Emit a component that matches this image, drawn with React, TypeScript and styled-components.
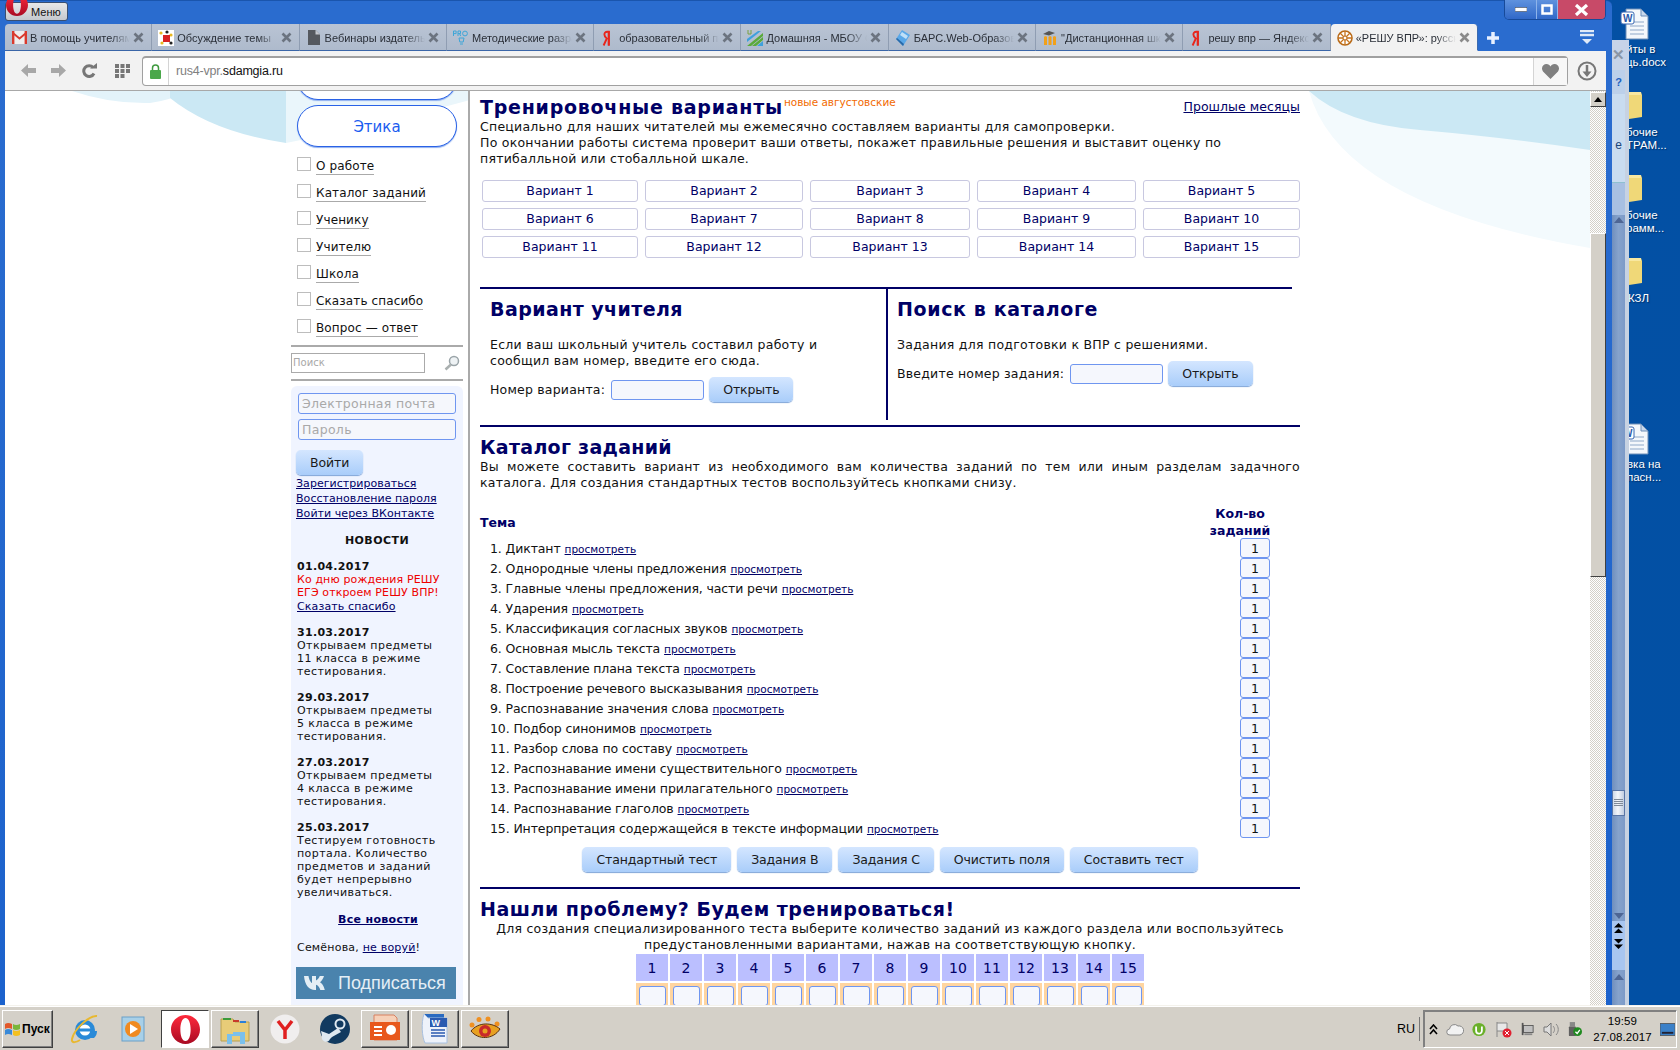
import React from 'react';
import styled, { createGlobalStyle } from 'styled-components';

const Global = createGlobalStyle`
  html, body { margin: 0; padding: 0; overflow: hidden; background: #054ea4; }
  * { box-sizing: border-box; }
`;
const VERDANA = `"DejaVu Sans", Verdana, sans-serif`;
const UI = `"Liberation Sans", Arial, sans-serif`;
const NAVY = '#000066';

const Desktop = styled.div`
  width: 1680px; height: 1050px; display: flex; flex-direction: column; overflow: hidden;
  font-family: ${UI};
`;
const Workspace = styled.div`
  position: relative; flex: 1; min-height: 0;
  background: linear-gradient(115deg, #0a5cb4 0%, #1f6db8 6%, #0650a4 14%, #0250a4 100%);
`;
const DeskIcon = styled.div<{ $x: number; $y: number }>`
  position: absolute; left: ${p => p.$x}px; top: ${p => p.$y}px;
`;
const DeskLabel = styled.div<{ $x: number; $y: number }>`
  position: absolute; left: ${p => p.$x}px; top: ${p => p.$y}px;
  color: #fff; font-size: 11.5px; line-height: 13px; font-family: ${UI}; white-space: pre;
  text-shadow: 1px 1px 1px #00306a;
`;

/* window behind */
const BackWindow = styled.div`
  position: absolute; left: 1612px; top: 40px; width: 17px; height: 965px;
  display: flex; flex-direction: column; border-right: 4px solid #c7d2e2; background: #7f9cc8;
  border-top-left-radius: 2px;
`;
const BackTitle = styled.div`
  height: 30px; background: #c6d3e8; color: #8a96a6; font: bold 15px ${UI};
  display: flex; align-items: center; justify-content: center; margin-right: -4px; padding-right: 4px;
`;
const BackHelp = styled.div`
  height: 24px; background: #bcd0ea; display: flex; align-items: center; justify-content: center;
  color: #2060c0; font: bold 11px ${UI};
`;
const BackPane = styled.div`
  height: 89px; background: #c9dcf0; display: flex; align-items: flex-end; justify-content: center;
  padding-bottom: 30px; color: #21467a; font: 12px ${UI}; border-bottom: 1px solid #8fc0d0;
`;
const BackBand = styled.div`
  height: 32px; background: #a8c0e2;
`;
const BackTrack = styled.div`
  flex: 1; display: flex; flex-direction: column; align-items: center;
  background: linear-gradient(90deg, #6f8fbe, #86a3cc 50%, #7c9ac8);
`;
const BackSpacer = styled.div<{ $h: number }>` height: ${p => p.$h}px; flex: none; `;
const BackThumb = styled.div`
  width: 13px; height: 26px; flex: none; background: linear-gradient(90deg,#cdd8e8,#f4f6fa 45%,#c0cde0);
  border: 1px solid #5a76a6; display: flex; align-items: center; justify-content: center;
`;
const BackJump = styled.div`
  width: 13px; height: 49px; flex: none; background: #a8c6f0; display: flex; flex-direction: column;
  align-items: center; padding-top: 2px; gap: 1px; border-bottom: 4px solid #a8c6f0;
`;

/* browser window */
const BrowserWindow = styled.div`
  position: absolute; left: 0; top: 0; width: 1612px; height: 1005px;
  display: flex; flex-direction: column; padding: 0 6px 0 5px;
  background: linear-gradient(#2a6ccf, #2a6ccf 60px, #1c62cc);
  border-top: 1px solid #1a55ad; border-top-right-radius: 6px;
`;
const TitleRow = styled.div`
  height: 23px; flex: none; display: flex; justify-content: space-between; align-items: flex-start;
`;
const MenuButton = styled.div`
  position: relative; width: 63px; height: 19px; margin-top: 1px; border: 1px solid #3a4f70; border-radius: 3px;
  background: linear-gradient(#e8e8e8, #c4c8ce); color: #111; font: 11px ${UI};
  display: flex; align-items: center; padding-left: 25px;
`;
const MenuLogo = styled.span`
  position: absolute; left: 0; top: -9px; display: flex;
`;
const Controls = styled.div`
  width: 102px; height: 20px; display: flex; margin-top: -1px; border: 1px solid #174a9a; border-top: 0;
  border-radius: 0 0 5px 5px; overflow: hidden; background: #3a76d4;
`;
const CtrlBtn = styled.div<{ $w: number; $red?: boolean }>`
  width: ${p => p.$w}px; display: flex; align-items: center; justify-content: center;
  background: ${p => (p.$red ? '#c84a68' : 'linear-gradient(#5f92de,#3068c8)')};
  border-right: ${p => (p.$red ? '0' : '1px solid #8fb4ea')};
`;
const TabRow = styled.div`
  height: 27px; flex: none; display: flex; align-items: stretch;
`;
const Tab = styled.div<{ $active?: boolean }>`
  width: 147.3px; flex: none; display: flex; align-items: center; gap: 3px; padding: 1px 7px 0 6px;
  background: ${p => (p.$active ? '#f2f2f2' : 'linear-gradient(#b9c4d4,#aebacc)')};
  border-right: 1px solid ${p => (p.$active ? '#3a6ab0' : '#8f9db2')};
  border-bottom: 1px solid ${p => (p.$active ? '#f2f2f2' : '#3a66a8')};
  border-radius: ${p => (p.$active ? '4px 4px 0 0' : '0')};
  &:first-child { border-top-left-radius: 4px; }
`;
const TabIcon = styled.span`
  width: 16px; height: 16px; flex: none; display: flex; align-items: center; justify-content: center;
`;
const TabLabel = styled.span`
  flex: 1; min-width: 0; overflow: hidden; white-space: nowrap; color: #2a2f38; font: 11px ${UI};
  -webkit-mask-image: linear-gradient(90deg, #000 80%, transparent);
  mask-image: linear-gradient(90deg, #000 80%, transparent);
`;
const TabClose = styled.span`
  width: 11px; height: 11px; flex: none; display: flex;
`;
const TabExtras = styled.div`
  flex: 1; display: flex; align-items: center; justify-content: space-between; padding: 0 11px 0 9px;
`;
const Toolbar = styled.div`
  height: 40px; flex: none; display: flex; align-items: center; background: #f2f2f2;
  border-bottom: 1px solid #a8a8a8; padding: 0 0 0 16px;
`;
const NavIcon = styled.span<{ $w: number }>`
  width: ${p => p.$w}px; flex: none; display: flex; align-items: center;
`;
const Address = styled.div`
  width: 1426px; height: 30px; flex: none; display: flex; align-items: center; background: #fff;
  border: 1px solid #a0a0a0; border-top-width: 2px; border-radius: 4px; margin-left: 0;
`;
const LockBox = styled.span`
  width: 26px; height: 100%; flex: none; display: flex; align-items: center; justify-content: center;
  border-right: 1px solid #d4d4d4; margin: 0 7px 0 0;
`;
const UrlFaint = styled.span` color: #808080; font: 12.5px ${UI}; letter-spacing: -.2px; `;
const UrlMain = styled.span` color: #111; font: 12.5px ${UI}; letter-spacing: -.2px; `;
const HeartBox = styled.span`
  margin-left: auto; width: 34px; height: 100%; flex: none; display: flex; align-items: center;
  justify-content: center; border-left: 1px solid #d4d4d4; background: #f7f7f7;
`;
const DownloadBox = styled.span`
  margin-left: 9px; display: flex;
`;

/* viewport */
const Viewport = styled.div`
  flex: 1; min-height: 0; display: flex;
`;
const Page = styled.div`
  position: relative; flex: 1; min-width: 0; overflow: hidden; background: #fff; display: flex;
  align-items: flex-start; padding-left: 286px;
`;
const PageDecor = styled.svg`
  position: absolute; left: 0; top: 0;
`;
const Side = styled.aside`
  position: relative; width: 172px; flex: none; margin-right: 5px; font-family: ${VERDANA};
`;
const SubjectButton = styled.div<{ $clip?: boolean }>`
  width: 160px; height: 42px; margin: ${p => (p.$clip ? '-33px 0 5px 6px' : '0 0 0 6px')};
  border: 1.5px solid #2a62e6; border-radius: 21px; background: #fff; color: #1a5cf0; padding-top: 2px;
  display: flex; align-items: center; justify-content: center; font: 15px ${VERDANA};
  box-shadow: 0 1px 1px #8fb0f0;
`;
const MenuList = styled.ul`
  list-style: none; margin: 10px 0 0; padding: 0 0 0 6px; height: 188px;
`;
const MenuItem = styled.li`
  height: 27px; display: flex; align-items: flex-start; gap: 5px;
`;
const MenuCheck = styled.span`
  width: 14px; height: 14px; flex: none; border: 1px solid #bdbdbd; background: #fff;
`;
const MenuLink = styled.span`
  font-size: 12px; line-height: 15px; color: #111; border-bottom: 1px solid #aaa; margin-top: 2px;
  letter-spacing: .12px;
`;
const SearchRow = styled.div`
  height: 36px; display: flex; align-items: center; justify-content: space-between; padding-right: 3px;
  border-top: 2px solid #aaa; border-bottom: 2px solid #aaa;
`;
const SearchField = styled.div`
  width: 134px; height: 20px; border: 1px solid #aaa; background: #fff; color: #a8a8a8;
  font: 10px/18px ${VERDANA}; padding-left: 1px;
`;
const LoginPanel = styled.div`
  margin-top: 5px; height: 640px; background: #f0f4ff; border-radius: 6px 6px 0 0; padding: 7px 5px 0;
`;
const LoginInput = styled.div`
  width: 158px; height: 21px; margin: 0 0 5px 2px; border: 1.5px solid #6f96f0; border-radius: 3px;
  background: #f5f7fc; color: #a9a9a9; font: 12.5px/20px ${VERDANA}; padding-left: 3px; letter-spacing: .3px;
`;
const BlueButton = styled.div`
  height: 25px; padding: 0 14px; flex: none; display: inline-flex; align-items: center; justify-content: center;
  border-radius: 5px; background: linear-gradient(#d4e6ff, #a9cdfa); color: #1a1a1a;
  font: 12.5px ${VERDANA}; letter-spacing: -.12px; box-shadow: 0 1px 1px #7fa5d8;
`;
const LoginActions = styled.div` margin-top: 10px; margin-bottom: 1px; `;
const SideLink = styled.a`
  display: block; font-size: 11px; line-height: 15px; color: ${NAVY}; text-decoration: underline;
  letter-spacing: .05px;
`;
const NewsHead = styled.div`
  margin-top: 13px; text-align: center; font-weight: bold; font-size: 11px; line-height: 14px; color: #111;
  letter-spacing: .45px;
`;
const NewsItem = styled.div<{ $first?: boolean }>`
  margin-top: ${p => (p.$first ? 12 : 13)}px; padding-left: 1px; font-size: 11px; line-height: 13px; color: #111;
  letter-spacing: .42px;
`;
const NewsDate = styled.div` font-weight: bold; letter-spacing: .3px; `;
const NewsRed = styled.div` color: #ee0000; letter-spacing: .12px; `;
const NewsLink = styled.a` display: block; margin-top: 1px; margin-bottom: 2px; color: ${NAVY}; text-decoration: underline; letter-spacing: .12px; `;
const AllNews = styled.a`
  display: block; margin-top: 14px; text-align: center; font-weight: bold; font-size: 11px; line-height: 14px;
  color: ${NAVY}; text-decoration: underline; padding-left: 2px; letter-spacing: .3px;
`;
const Thief = styled.div` margin-top: 14px; padding-left: 1px; font-size: 11px; line-height: 14px; color: #111; letter-spacing: .2px; `;
const ThiefLink = styled.a` color: ${NAVY}; text-decoration: underline; `;
const VkBanner = styled.div`
  margin-top: 12px; width: 160px; height: 32px; background: #4a83ad; color: #e4eef5; display: flex;
  align-items: center; gap: 9px; padding-left: 8px; font: 18px ${UI};
`;

const Main = styled.main`
  position: relative; width: 833px; flex: none; height: 1000px; background: #fff; border-left: 2px solid #aaa;
  padding: 0 1px 0 10px; font-family: ${VERDANA}; font-size: 12.5px; line-height: 16px; color: #111;
`;
const HeadRow = styled.div`
  height: 28px; padding-top: 3px; display: flex; align-items: center; justify-content: space-between;
`;
const HeadLeft = styled.div` display: flex; align-items: flex-start; `;
const Heading = styled.h2<{ $ls?: number }>`
  margin: 0; font-size: 19px; line-height: 24px; font-weight: bold; color: ${NAVY};
  letter-spacing: ${p => p.$ls ?? 0.3}px;
`;
const NewTag = styled.span`
  font-size: 10.5px; line-height: 12px; color: #f26a00; margin: 1px 0 0 1px;
`;
const PastLink = styled.a`
  color: ${NAVY}; text-decoration: underline; letter-spacing: .05px;
`;
const Para = styled.p<{ $center?: boolean; $just?: boolean }>`
  margin: 0; letter-spacing: .24px;
  text-align: ${p => (p.$center ? 'center' : p.$just ? 'justify' : 'left')};
`;
const VariantGrid = styled.div`
  margin: 13px 0 0 2px; display: grid; grid-template-columns: 156px 158px 160px 159px 157px;
  grid-auto-rows: 22px; column-gap: 7px; row-gap: 6px;
`;
const VariantBtn = styled.div`
  display: flex; align-items: center; justify-content: center; color: ${NAVY}; padding-top: 0;
  border: 1px solid #c8c8e0; border-radius: 3px; background: #fff;
`;
const TwoPanels = styled.section`
  margin-top: 29px; width: 812px; height: 133px; display: flex; border-top: 2px solid ${NAVY};
`;
const PanelCol = styled.div<{ $first?: boolean }>`
  width: ${p => (p.$first ? '408px' : '404px')}; padding: 8px 0 0 ${p => (p.$first ? '10px' : '9px')};
  border-right: ${p => (p.$first ? `2px solid ${NAVY}` : '0')};
`;
const PanelText = styled.div` margin-top: 16px; letter-spacing: .26px; `;
const FormRow = styled.div`
  margin-top: 8px; display: flex; align-items: center; gap: 5px; letter-spacing: .2px;
`;
const SmallInput = styled.div`
  width: 93px; height: 20px; margin-left: 1px; border: 1.5px solid #6f96f0; border-radius: 3px; background: #f5f7fd;
`;
const Rule = styled.div`
  height: 2px; background: ${NAVY};
`;
const CatalogRule = styled(Rule)` margin-top: 5px; `;
const SectionTitle = styled(Heading)` margin-top: 8px; `;
const ThemeHead = styled.div`
  margin-top: 16px; height: 31px; display: flex; justify-content: space-between; align-items: center;
  font-weight: bold; color: ${NAVY};
`;
const CountHead = styled.div`
  width: 70px; margin-right: 25px; text-align: center; line-height: 16.5px; font-size: 12.5px;
`;
const TaskRow = styled.div`
  height: 20px; display: flex; align-items: center; justify-content: space-between; padding: 1px 30px 0 10px;
  letter-spacing: -.12px;
`;
const TaskLink = styled.a`
  font-size: 10.5px; color: ${NAVY}; text-decoration: underline; margin-left: 4px; letter-spacing: 0;
`;
const CountInput = styled.div`
  width: 30px; height: 20px; margin-top: -1px; border: 1.5px solid #6f96f0; border-radius: 3px; background: #f5f7fd;
  display: flex; align-items: center; justify-content: center; color: #111; padding-top: 1px;
`;
const ActionRow = styled.div`
  margin-top: 9px; display: flex; justify-content: center; gap: 6px;
`;
const TrainRule = styled(Rule)` margin-top: 15px; `;
const NumGrid = styled.div`
  margin: 1px auto 0; width: 508px; display: grid; grid-template-columns: repeat(15, 32px); column-gap: 2px;
  row-gap: 2px; grid-template-rows: 27px 27px;
`;
const NumHead = styled.div`
  background: #bbbfff; color: ${NAVY}; display: flex; align-items: center; justify-content: center; font-size: 14px;
`;
const NumCell = styled.div`
  background: #ffd5a0; padding: 3px 2.5px;
`;
const NumInput = styled.div`
  height: 20px; border: 1.5px solid #6f96f0; border-radius: 3px; background: #f5f7fd;
`;

/* scrollbar */
const Scrollbar = styled.div`
  width: 16px; flex: none; display: flex; flex-direction: column;
  background: repeating-conic-gradient(#d4d0c8 0 25%, #fff 0 50%) 0 0 / 2px 2px;
`;
const ScrollBtn = styled.div`
  height: 15px; flex: none; background: #d4d0c8; display: flex; align-items: center; justify-content: center;
  border: 1px solid; border-color: #fff #404040 #404040 #fff; margin-top: 1px;
`;
const ScrollThumb = styled.div`
  height: 344px; margin-top: 126px; flex: none; background: #d4d0c8;
  border: 1px solid; border-color: #fff #404040 #404040 #fff;
`;

/* taskbar */
const Taskbar = styled.footer`
  height: 45px; flex: none; background: #d4d0c8; border-top: 1px solid #f4f2ec; box-shadow: inset 0 1px 0 #fff;
  display: flex; align-items: center; padding: 4px 3px 2px 2px;
`;
const StartBtn = styled.div`
  width: 51px; height: 38px; flex: none; display: flex; align-items: center; gap: 1px; padding-left: 1px;
  font: bold 12px ${UI}; color: #000;
  border: 1px solid; border-color: #fff #404040 #404040 #fff; box-shadow: inset -1px -1px 0 #808080;
`;
const TaskIcons = styled.div`
  display: flex; align-items: center; margin-left: 8px; height: 38px;
`;
const TaskBtn = styled.div<{ $w?: number; $state?: 'flat' | 'raised' | 'pressed' }>`
  width: ${p => p.$w ?? 48}px; height: 38px; margin-right: 2px; flex: none; display: flex; align-items: center;
  justify-content: center;
  ${p => p.$state === 'raised' ? 'border:1px solid; border-color:#fff #404040 #404040 #fff; box-shadow: inset -1px -1px 0 #808080;' : ''}
  ${p => p.$state === 'pressed' ? 'border:1px solid; border-color:#404040 #fff #fff #404040; background:#fff;' : ''}
`;
const Lang = styled.div`
  margin-left: auto; padding-left: 18px; font: 12.5px ${UI}; color: #000; height: 24px; line-height: 24px;
  border-right: 1px solid #777; box-sizing: content-box; padding-right: 3px; width: 19px;
`;
const Tray = styled.div`
  margin-left: 3px; width: 254px; height: 38px; flex: none; display: flex; align-items: center;
  border: 1px solid; border-color: #808080 #fff #fff #808080; padding: 0 1px 0 4px; box-shadow: 1px 1px 0 #808080 inset;
`;
const TraySlot = styled.span<{ $w: number }>`
  width: ${p => p.$w}px; flex: none; display: flex; justify-content: center; align-items: center;
`;
const Clock = styled.div`
  width: 79px; margin-left: 3px; text-align: center; font: 11.5px/16px ${UI}; color: #000; letter-spacing: .1px;
`;

/* ---------- drawings ---------- */
const OperaIcon = ({ s = 26 }: { s?: number }) => (
  <svg width={s} height={s} viewBox="0 0 26 26">
    <defs><linearGradient id="op" x1="0" y1="0" x2="0" y2="1"><stop offset="0" stopColor="#ff2a3c" /><stop offset="1" stopColor="#a80a22" /></linearGradient></defs>
    <path fillRule="evenodd" fill="url(#op)" d="M13 0c7.2 0 13 5.8 13 13s-5.8 13-13 13S0 20.2 0 13 5.8 0 13 0zm0 2.6c-3 0-4.6 4.8-4.6 10.4S10 23.4 13 23.4s4.6-4.8 4.6-10.4S16 2.6 13 2.6z" />
  </svg>
);
const Close = ({ c = '#6c7480' }: { c?: string }) => (
  <svg width="11" height="11" viewBox="0 0 11 11"><path d="M1.5 1.5l8 8M9.5 1.5l-8 8" stroke={c} strokeWidth="2.6" /></svg>
);
const Gmail = () => (
  <svg width="15" height="13" viewBox="0 0 15 13"><rect width="15" height="13" fill="#eee" /><path d="M0 0h2.4v13H0zM12.6 0H15v13h-2.4z" fill="#d93a2e" /><path d="M0 0l7.5 6.2L15 0v2.6L7.5 8.8 0 2.6z" fill="#d93a2e" /></svg>
);
const Mascot = () => (
  <svg width="16" height="16" viewBox="0 0 16 16"><rect width="16" height="16" fill="#fff" /><circle cx="3" cy="3" r="1.6" fill="#e8b820" /><circle cx="9" cy="2" r="1.6" fill="#222" /><circle cx="13" cy="5" r="1.6" fill="#e8b820" /><circle cx="4" cy="13" r="1.6" fill="#e8b820" /><circle cx="13" cy="13" r="1.6" fill="#222" /><rect x="5" y="5" width="7" height="7" fill="#d82020" /></svg>
);
const DocIcon = () => (
  <svg width="12" height="15" viewBox="0 0 12 15"><path d="M0 0h7.5L12 4.5V15H0z" fill="#55595f" /><path d="M7.5 0v4.5H12z" fill="#c4c8ce" /></svg>
);
const ProIcon = () => (
  <svg width="16" height="16" viewBox="0 0 16 16"><g fill="none" stroke="#3ea6d8" strokeWidth="1"><path d="M.5 6V1h2.6v2.6H.5" /><path d="M5 6V1h2.5v2.6H5M6.6 3.6L7.6 6" /><circle cx="12" cy="3.5" r="2.4" /><path d="M6 8h5l-.8 4H6.8zM7 14h3" /></g></svg>
);
const YaIcon = () => (
  <svg width="12" height="16" viewBox="0 0 12 16"><path d="M6.8 15.5V1.8H5.4C3.2 1.8 2.4 3 2.4 4.6c0 1.9.9 2.8 2.4 3.9L1.6 15.5" fill="none" stroke="#e8261c" strokeWidth="1.9" /><path d="M6.8 1v14.6" stroke="#e8261c" strokeWidth="2" /></svg>
);
const UrIcon = () => (
  <svg width="16" height="16" viewBox="0 0 16 16"><path d="M0 16L16 3v3L4 16zM5 16L16 7v3l-7 6z" fill="#5aaa3a" /><path d="M10 16l6-5v5zM0 12L14 1h-3L0 9z" fill="#3ea0dc" /><path d="M1 0v4h3V0" fill="none" stroke="#7aa040" /></svg>
);
const BarsIcon = () => (
  <svg width="16" height="16" viewBox="0 0 16 16"><path d="M7 0l8 5-7 11-7-7z" fill="#5aa8e8" /><path d="M1 9l7 7 1-2-7-6z" fill="#2a6aa8" /><path d="M7 2l6 4-2 3-6-4z" fill="#bfe0f8" /></svg>
);
const MoodleIcon = () => (
  <svg width="16" height="16" viewBox="0 0 16 16"><path d="M2 15V7c0-1 3-1 3 0v8zM6.5 15V7c0-1 3-1 3 0v8zM11 15V7c0-1 3-1 3 0v8z" fill="#f2a018" /><path d="M1 4l6-3 6 2-6 2.5z" fill="#555" /></svg>
);
const ResheuIcon = () => (
  <svg width="16" height="16" viewBox="0 0 16 16"><circle cx="8" cy="8" r="7" fill="#fff" stroke="#b86a18" strokeWidth="1.6" /><path d="M8 1v14M1 8h14M3 3l10 10M13 3L3 13" stroke="#c8741c" strokeWidth="1.3" /><circle cx="8" cy="8" r="2" fill="#fff" stroke="#b86a18" /></svg>
);
const tabs = [
  { icon: <Gmail />, t: 'В помощь учителям начальной' },
  { icon: <Mascot />, t: 'Обсуждение темы' },
  { icon: <DocIcon />, t: 'Вебинары издательства' },
  { icon: <ProIcon />, t: 'Методические разработки' },
  { icon: <YaIcon />, t: ' образовательный портал' },
  { icon: <UrIcon />, t: 'Домашняя - МБОУ СОШ' },
  { icon: <BarsIcon />, t: 'БАРС.Web-Образование' },
  { icon: <MoodleIcon />, t: '"Дистанционная школа"' },
  { icon: <YaIcon />, t: ' решу впр — Яндекс' },
];

const menu = ['О работе', 'Каталог заданий', 'Ученику', 'Учителю', 'Школа', 'Сказать спасибо', 'Вопрос — ответ'];
const news = [
  { d: '31.03.2017', t: ['Открываем предметы', '11 класса в режиме', 'тестирования.'] },
  { d: '29.03.2017', t: ['Открываем предметы', '5 класса в режиме', 'тестирования.'] },
  { d: '27.03.2017', t: ['Открываем предметы', '4 класса в режиме', 'тестирования.'] },
  { d: '25.03.2017', t: ['Тестируем готовность', 'портала. Количество', 'предметов и заданий', 'будет непрерывно', 'увеличиваться.'] },
];
const tasks = ['Диктант', 'Однородные члены предложения', 'Главные члены предложения, части речи', 'Ударения', 'Классификация согласных звуков', 'Основная мысль текста', 'Составление плана текста', 'Построение речевого высказывания', 'Распознавание значения слова', 'Подбор синонимов', 'Разбор слова по составу', 'Распознавание имени существительного', 'Распознавание имени прилагательного', 'Распознавание глаголов', 'Интерпретация содержащейся в тексте информации'];
const nums = Array.from({ length: 15 }, (_, i) => i + 1);

const WordDoc = () => (
  <svg width="30" height="32" viewBox="0 0 30 32">
    <path d="M6 1h15l7 7v23H6z" fill="#f4f7fb" stroke="#6f8fb8" />
    <path d="M21 1v7h7z" fill="#c8d8ec" stroke="#6f8fb8" />
    <path d="M10 14h14M10 18h14M10 22h14M10 26h14" stroke="#8fa8c8" />
    <rect x="1" y="4" width="13" height="12" rx="2" fill="#fff" stroke="#3a66b0" />
    <text x="3" y="14" fontSize="10" fontWeight="bold" fontFamily="Liberation Sans" fill="#2a56a8">W</text>
  </svg>
);
const DeskFolder = () => (
  <svg width="14" height="30" viewBox="0 0 14 30"><path d="M0 2h12l1 3v22l-13 2z" fill="#f0d878" /><path d="M0 2h12v3H0z" fill="#f8e8a0" /></svg>
);

export default function App() {
  return (
    <Desktop>
      <Global />
      <Workspace>
        <DeskIcon $x={1620} $y={8}><WordDoc /></DeskIcon>
        <DeskLabel $x={1626} $y={43}>{'йты в\nць.docx'}</DeskLabel>
        <DeskIcon $x={1629} $y={90}><DeskFolder /></DeskIcon>
        <DeskLabel $x={1626} $y={126}>{'бочие\nТРАМ...'}</DeskLabel>
        <DeskIcon $x={1629} $y={173}><DeskFolder /></DeskIcon>
        <DeskLabel $x={1626} $y={209}>{'бочие\nрамм...'}</DeskLabel>
        <DeskIcon $x={1629} $y={256}><DeskFolder /></DeskIcon>
        <DeskLabel $x={1628} $y={292}>КЗЛ</DeskLabel>
        <DeskIcon $x={1620} $y={423}><WordDoc /></DeskIcon>
        <DeskLabel $x={1627} $y={458}>{'вка на\nпасн...'}</DeskLabel>

        <BackWindow>
          <BackTitle>✕</BackTitle>
          <BackHelp>?</BackHelp>
          <BackPane>е</BackPane>
          <BackBand />
          <BackTrack>
            <BackSpacer $h={2} />
            <svg width="10" height="6" viewBox="0 0 10 6"><path d="M0 6L5 0l5 6z" fill="#4e6694" /></svg>
            <BackSpacer $h={567} />
            <BackThumb>
              <svg width="9" height="8" viewBox="0 0 9 8"><path d="M0 .5h9M0 2.5h9M0 4.5h9M0 6.5h9" stroke="#808a98" /></svg>
            </BackThumb>
            <BackSpacer $h={97} />
            <svg width="10" height="6" viewBox="0 0 10 6"><path d="M0 0l5 6 5-6z" fill="#4e6694" /></svg>
            <BackSpacer $h={2} />
            <BackJump>
              <svg width="9" height="10" viewBox="0 0 9 10"><path d="M0 4.500l4.500-4.500 4.500 4.500zM0 10l4.500-4.500L9 10z" fill="#000" /></svg>
              <BackSpacer $h={4} />
              <svg width="9" height="10" viewBox="0 0 9 10"><path d="M0 0l4.500 4.500L9 0zM0 5.500L4.500 10 9 5.500z" fill="#000" /></svg>
            </BackJump>
            <BackSpacer $h={4} />
            <svg width="10" height="6" viewBox="0 0 10 6"><path d="M0 6L5 0l5 6z" fill="#4e6694" /></svg>
          </BackTrack>
        </BackWindow>

        <BrowserWindow>
          <TitleRow>
            <MenuButton>
              <MenuLogo><OperaIcon s={22} /></MenuLogo>
              Меню
            </MenuButton>
            <Controls>
              <CtrlBtn $w={33}><svg width="12" height="5" viewBox="0 0 12 5"><rect width="12" height="4" y=".5" fill="#fff" stroke="#333" strokeWidth=".5" /></svg></CtrlBtn>
              <CtrlBtn $w={21}><svg width="12" height="11" viewBox="0 0 12 11"><rect x="1.500" y="1.500" width="9" height="8" fill="none" stroke="#fff" strokeWidth="2.500" /></svg></CtrlBtn>
              <CtrlBtn $w={48} $red><svg width="15" height="12" viewBox="0 0 15 12"><path d="M2 1l11 10M13 1L2 11" stroke="#fff" strokeWidth="3.200" /></svg></CtrlBtn>
            </Controls>
          </TitleRow>
          <TabRow>
            {tabs.map((x, i) => (
              <Tab key={i}>
                <TabIcon>{x.icon}</TabIcon>
                <TabLabel>{x.t}</TabLabel>
                <TabClose><Close /></TabClose>
              </Tab>
            ))}
            <Tab $active>
              <TabIcon><ResheuIcon /></TabIcon>
              <TabLabel>«РЕШУ ВПР»: русский язык</TabLabel>
              <TabClose><Close c="#8a8a8a" /></TabClose>
            </Tab>
            <TabExtras>
              <svg width="12" height="12" viewBox="0 0 12 12"><path d="M6 0v12M0 6h12" stroke="#e8f0ff" strokeWidth="3.500" /></svg>
              <svg width="16" height="15" viewBox="0 0 16 15"><path d="M1 1h14M1 5h14" stroke="#e0eaf8" strokeWidth="2.500" /><path d="M3 9h10l-5 5z" fill="#e0eaf8" /></svg>
            </TabExtras>
          </TabRow>
          <Toolbar>
            <NavIcon $w={30}>
              <svg width="15" height="13" viewBox="0 0 15 13"><path d="M7 0L0 6.500 7 13V9h8V4H7z" fill="#a8a8a8" /></svg>
            </NavIcon>
            <NavIcon $w={31}>
              <svg width="15" height="13" viewBox="0 0 15 13"><path d="M8 0l7 6.500L8 13V9H0V4h8z" fill="#a8a8a8" /></svg>
            </NavIcon>
            <NavIcon $w={33}>
              <svg width="15" height="16" viewBox="0 0 15 16"><path d="M12 10.500A5.400 5.400 0 1 1 11.200 4.500" fill="none" stroke="#777" strokeWidth="3" /><path d="M8 5.500h7V0z" fill="#777" /></svg>
            </NavIcon>
            <NavIcon $w={27}>
              <svg width="15" height="14" viewBox="0 0 15 14"><g fill="#777"><rect width="4" height="4" /><rect x="5.500" width="4" height="4" /><rect x="11" width="4" height="4" /><rect y="5" width="4" height="4" /><rect x="5.500" y="5" width="4" height="4" /><rect x="11" y="5" width="4" height="4" /><rect y="10" width="4" height="4" /><rect x="5.500" y="10" width="4" height="4" /></g></svg>
            </NavIcon>
            <Address>
              <LockBox>
                <svg width="11" height="15" viewBox="0 0 11 15"><path d="M2.500 7V4a3 3 0 0 1 6 0v3" fill="none" stroke="#3f9a3f" strokeWidth="1.500" /><rect y="6" width="11" height="9" rx="1" fill="#4aa84a" /></svg>
              </LockBox>
              <UrlFaint>rus4-vpr.</UrlFaint><UrlMain>sdamgia.ru</UrlMain>
              <HeartBox>
                <svg width="17" height="15" viewBox="0 0 17 15"><path d="M8.500 15L1 7.500C-1.500 4 1 0 4.500 0c2 0 3.200 1 4 2.500C9.300 1 10.500 0 12.500 0 16 0 18.500 4 16 7.500z" fill="#808080" /></svg>
              </HeartBox>
            </Address>
            <DownloadBox>
              <svg width="20" height="20" viewBox="0 0 20 20"><circle cx="10" cy="10" r="8.500" fill="none" stroke="#777" strokeWidth="2" /><path d="M10 4v8" stroke="#777" strokeWidth="2.500" /><path d="M5.500 10.500h9L10 16z" fill="#777" /></svg>
            </DownloadBox>
          </Toolbar>
          <Viewport>
            <Page>
              <PageDecor width="1585" height="914" viewBox="5 91 1585 914">
                <path d="M72 91Q110 104 150 103Q172 100 186 91Z" fill="#e3f3fa" />
                <path d="M170 91H286V143Q212 132 170 98Z" fill="#cbe8f4" />
                <path d="M286 91H470V100Q380 125 286 143Z" fill="#eaf6fb" />
                <path d="M1309 91Q1340 205 1590 248V91Z" fill="#f3fafd" />
                <path d="M1309 91Q1345 124 1420 130Q1510 138 1590 150V91Z" fill="#cbe8f4" />
              </PageDecor>
              <Side>
                <SubjectButton $clip />
                <SubjectButton>Этика</SubjectButton>
                <MenuList>
                  {menu.map(m => (
                    <MenuItem key={m}><MenuCheck /><MenuLink>{m}</MenuLink></MenuItem>
                  ))}
                </MenuList>
                <SearchRow>
                  <SearchField>Поиск</SearchField>
                  <svg width="16" height="16" viewBox="0 0 16 16"><circle cx="10" cy="6" r="4.500" fill="#eef2f4" stroke="#9aa4a8" strokeWidth="1.500" /><path d="M7 9.500L1.500 14.500" stroke="#aab0b0" strokeWidth="2.500" /></svg>
                </SearchRow>
                <LoginPanel>
                  <LoginInput>Электронная почта</LoginInput>
                  <LoginInput>Пароль</LoginInput>
                  <LoginActions><BlueButton>Войти</BlueButton></LoginActions>
                  <SideLink>Зарегистрироваться</SideLink>
                  <SideLink>Восстановление пароля</SideLink>
                  <SideLink>Войти через ВКонтакте</SideLink>
                  <NewsHead>НОВОСТИ</NewsHead>
                  <NewsItem $first>
                    <NewsDate>01.04.2017</NewsDate>
                    <NewsRed>Ко дню рождения РЕШУ</NewsRed>
                    <NewsRed>ЕГЭ откроем РЕШУ ВПР!</NewsRed>
                    <NewsLink>Сказать спасибо</NewsLink>
                  </NewsItem>
                  {news.map(n => (
                    <NewsItem key={n.d}>
                      <NewsDate>{n.d}</NewsDate>
                      {n.t.map(l => <div key={l}>{l}</div>)}
                    </NewsItem>
                  ))}
                  <AllNews>Все новости</AllNews>
                  <Thief>Семёнова, <ThiefLink>не воруй</ThiefLink>!</Thief>
                  <VkBanner>
                    <svg width="25" height="14" viewBox="0 0 25 14"><path d="M0 0h4.500c.5 3 2 6.500 3.500 7V0h4v4.500C13.500 4 15 2 15.800 0H20c-.8 3-2.500 5-4 6.200 1.800 1 3.700 3.200 4.800 7.800h-4.500c-.8-2.800-2.500-5-4.300-5.300V14h-1C5 14 .8 9 0 0z" fill="#e4eef5" /></svg>
                    Подписаться
                  </VkBanner>
                </LoginPanel>
              </Side>
              <Main>
                <HeadRow>
                  <HeadLeft>
                    <Heading $ls={0.75}>Тренировочные варианты</Heading>
                    <NewTag>новые августовские</NewTag>
                  </HeadLeft>
                  <PastLink>Прошлые месяцы</PastLink>
                </HeadRow>
                <Para>Специально для наших читателей мы ежемесячно составляем варианты для самопроверки.<br />По окончании работы система проверит ваши ответы, покажет правильные решения и выставит оценку по пятибалльной или стобалльной шкале.</Para>
                <VariantGrid>
                  {nums.map(n => <VariantBtn key={n}>Вариант {n}</VariantBtn>)}
                </VariantGrid>
                <TwoPanels>
                  <PanelCol $first>
                    <Heading $ls={0.43}>Вариант учителя</Heading>
                    <PanelText>Если ваш школьный учитель составил работу и<br />сообщил вам номер, введите его сюда.</PanelText>
                    <FormRow>Номер варианта: <SmallInput /><BlueButton>Открыть</BlueButton></FormRow>
                  </PanelCol>
                  <PanelCol>
                    <Heading $ls={0.63}>Поиск в каталоге</Heading>
                    <PanelText>Задания для подготовки к ВПР с решениями.</PanelText>
                    <FormRow>Введите номер задания: <SmallInput /><BlueButton>Открыть</BlueButton></FormRow>
                  </PanelCol>
                </TwoPanels>
                <CatalogRule />
                <SectionTitle>Каталог заданий</SectionTitle>
                <Para $just>Вы можете составить вариант из необходимого вам количества заданий по тем или иным разделам задачного каталога. Для создания стандартных тестов воспользуйтесь кнопками снизу.</Para>
                <ThemeHead>
                  <span>Тема</span>
                  <CountHead>Кол-во заданий</CountHead>
                </ThemeHead>
                {tasks.map((t, i) => (
                  <TaskRow key={t}>
                    <span>{i + 1}. {t}<TaskLink>просмотреть</TaskLink></span>
                    <CountInput>1</CountInput>
                  </TaskRow>
                ))}
                <ActionRow>
                  <BlueButton>Стандартный тест</BlueButton>
                  <BlueButton>Задания B</BlueButton>
                  <BlueButton>Задания C</BlueButton>
                  <BlueButton>Очистить поля</BlueButton>
                  <BlueButton>Составить тест</BlueButton>
                </ActionRow>
                <TrainRule />
                <SectionTitle $ls={0.52}>Нашли проблему? Будем тренироваться!</SectionTitle>
                <Para $center>Для создания специализированного теста выберите количество заданий из каждого раздела или воспользуйтесь<br />предустановленными вариантами, нажав на соответствующую кнопку.</Para>
                <NumGrid>
                  {nums.map(n => <NumHead key={n}>{n}</NumHead>)}
                  {nums.map(n => <NumCell key={n}><NumInput /></NumCell>)}
                </NumGrid>
              </Main>
            </Page>
            <Scrollbar>
              <ScrollBtn><svg width="8" height="5" viewBox="0 0 8 5"><path d="M0 5l4-5 4 5z" fill="#000" /></svg></ScrollBtn>
              <ScrollThumb />
            </Scrollbar>
          </Viewport>
        </BrowserWindow>
      </Workspace>
      <Taskbar>
        <StartBtn>
          <svg width="17" height="15" viewBox="0 0 17 15"><path d="M1 2Q4 0 8 2v5Q4 5 1 7z" fill="#e2582a" /><path d="M9 2q3 2 7 0v5q-4 2-7 0z" fill="#7ab63a" /><path d="M1 8q3-2 7 0v5q-4-2-7 0z" fill="#3a8ad8" /><path d="M9 8q3 2 7 0v5q-4 2-7 0z" fill="#f4c020" /></svg>
          Пуск
        </StartBtn>
        <TaskIcons>
          <TaskBtn>
            <svg width="30" height="32" viewBox="0 0 30 32"><circle cx="15" cy="17" r="10" fill="#2a8ad8" /><circle cx="15" cy="17" r="5.500" fill="#fff" /><rect x="9" y="15.500" width="13" height="3" fill="#2a8ad8" /><path d="M20 18h7c0 3-1 5-3 7H16c3 0 4-3 4-7z" fill="#2a8ad8" /><path d="M27 3C20 2 4 16 2 26c-1 5 5 3 8 1" fill="none" stroke="#e8b830" strokeWidth="2" /></svg>
          </TaskBtn>
          <TaskBtn>
            <svg width="30" height="28" viewBox="0 0 30 28"><rect x="2" y="2" width="22" height="24" fill="#a8d0e8" stroke="#6aa0c8" /><circle cx="13" cy="14" r="8" fill="#f08a20" /><path d="M10 9l8 5-8 5z" fill="#fff" /></svg>
          </TaskBtn>
          <TaskBtn $state="pressed"><OperaIcon s={29} /></TaskBtn>
          <TaskBtn $state="raised">
            <svg width="32" height="32" viewBox="0 0 32 32"><path d="M2 6h12l2 3h14v19H2z" fill="#e8cc78" stroke="#b8a050" /><rect x="4" y="5" width="8" height="2" fill="#3a9a3a" /><rect x="14" y="7" width="6" height="2" fill="#c83a2a" /><rect x="21" y="8" width="6" height="2" fill="#2a80d8" /><path d="M8 31V21h6v-2h12v12h-5v-8H13v8z" fill="#7ac0ec" /></svg>
          </TaskBtn>
          <TaskBtn>
            <svg width="30" height="30" viewBox="0 0 30 30"><circle cx="15" cy="15" r="14.500" fill="#f0eeee" /><path d="M8 7l7 9 7-9M15 15v10" fill="none" stroke="#e02020" strokeWidth="3.500" /></svg>
          </TaskBtn>
          <TaskBtn>
            <svg width="30" height="32" viewBox="0 0 30 32"><circle cx="15" cy="16" r="15" fill="#123a60" /><circle cx="20" cy="11" r="4.500" fill="none" stroke="#dfe8f0" strokeWidth="2" /><path d="M1 18l8 3 9-6 3 4-9 5-2 2a4 4 0 0 1-8-3z" fill="#dfe8f0" /></svg>
          </TaskBtn>
          <TaskBtn $state="raised">
            <svg width="32" height="30" viewBox="0 0 32 30"><path d="M5 1h20l3 3v22H5z" fill="#f6d0b8" stroke="#d88060" /><rect x="1" y="8" width="30" height="18" fill="#e8581c" /><circle cx="22" cy="16" r="5" fill="#fff" /><path d="M5 12h8v2H5zM5 16h8v2H5zM5 20h8v2H5z" fill="#fff" /></svg>
          </TaskBtn>
          <TaskBtn $state="raised">
            <svg width="32" height="32" viewBox="0 0 32 32"><path d="M5 1h20v5H5z" fill="#2a6ac0" /><path d="M5 1C2 10 3 24 6 30h22V5H9z" fill="#eef2fa" stroke="#a8c0e0" /><rect x="11" y="5" width="17" height="9" fill="#2a5ab0" /><text x="12.500" y="13" fontSize="9" fontWeight="bold" fill="#fff" fontFamily="Liberation Sans">W</text><path d="M12 17h14M12 20h14M12 23h14" stroke="#2a5ab0" strokeWidth="1.500" /></svg>
          </TaskBtn>
          <TaskBtn $state="raised">
            <svg width="34" height="26" viewBox="0 0 34 26"><circle cx="4" cy="9" r="2.500" fill="#f09020" /><circle cx="11" cy="3.500" r="2.500" fill="#f09020" /><circle cx="20" cy="3" r="2.500" fill="#f09020" /><circle cx="29" cy="8" r="2.500" fill="#f09020" /><path d="M3 15C10 6 24 6 32 13 25 24 10 24 3 15z" fill="#e8a020" stroke="#5a3010" /><circle cx="17" cy="15" r="6" fill="#c82a2a" /><circle cx="17" cy="15" r="2.500" fill="#e8a020" /></svg>
          </TaskBtn>
        </TaskIcons>
        <Lang>RU</Lang>
        <Tray>
          <TraySlot $w={10}><svg width="9" height="11" viewBox="0 0 9 11"><path d="M1 5l3.500-4L8 5M1 10l3.500-4L8 10" fill="none" stroke="#000" strokeWidth="1.600" /></svg></TraySlot>
          <TraySlot $w={34}><svg width="18" height="13" viewBox="0 0 18 13"><path d="M4 12a3 3 0 0 1-.5-6A5 5 0 0 1 12 3a4 4 0 0 1 2 9z" fill="#f2f2f2" stroke="#888" /></svg></TraySlot>
          <TraySlot $w={14}><svg width="17" height="17" viewBox="0 0 17 17"><circle cx="8.500" cy="8.500" r="8" fill="#6ab02a" /><path d="M5 5v5a3.500 3.500 0 0 0 7 0V5" fill="none" stroke="#fff" strokeWidth="2.200" /></svg></TraySlot>
          <TraySlot $w={34}><svg width="17" height="17" viewBox="0 0 17 17"><path d="M2 1v15M2 2h10v8H2" fill="#e8e8e8" stroke="#888" /><circle cx="12" cy="12" r="4.500" fill="#e02030" /><path d="M10 10l4 4M14 10l-4 4" stroke="#fff" /></svg></TraySlot>
          <TraySlot $w={14}><svg width="16" height="16" viewBox="0 0 16 16"><rect x="4" y="4" width="11" height="8" fill="#c0c0c0" stroke="#555" /><path d="M3 1v14" stroke="#555" strokeWidth="2" /><rect x="5" y="13" width="9" height="2" fill="#888" /></svg></TraySlot>
          <TraySlot $w={34}><svg width="16" height="15" viewBox="0 0 16 15"><path d="M1 5h3l4-4v13l-4-4H1z" fill="#ddd" stroke="#777" /><path d="M10 4c2 2 2 5 0 7M13 2c3 3 3 8 0 11" fill="none" stroke="#888" /></svg></TraySlot>
          <TraySlot $w={14}><svg width="16" height="17" viewBox="0 0 16 17"><rect x="2" y="0" width="6" height="5" fill="#888" /><rect x="1" y="5" width="8" height="11" rx="1" fill="#606060" /><circle cx="11" cy="11" r="5" fill="#1f8a1f" /><path d="M8.500 11l2 2 3-4" fill="none" stroke="#fff" strokeWidth="1.500" /></svg></TraySlot>
          <Clock>19:59<br />27.08.2017</Clock>
          <svg width="16" height="13" viewBox="0 0 16 13"><rect width="16" height="13" fill="#3a80c8" stroke="#555" /><rect y="9" x="2" width="12" height="2" fill="#223" /></svg>
        </Tray>
      </Taskbar>
    </Desktop>
  );
}
